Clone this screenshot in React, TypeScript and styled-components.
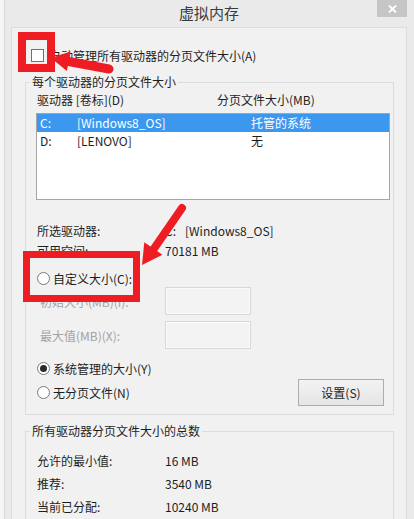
import React from 'react';
import styled, { createGlobalStyle } from 'styled-components';

const GlobalStyle = createGlobalStyle`
  html, body {
    margin: 0;
    padding: 0;
    background: #f6f6f6;
  }
  body {
    font-family: "Noto Sans CJK SC", "Noto Sans", sans-serif;
  }
`

const drives = [
    { letter: 'C:', label: '[Windows8_OS]', size: '托管的系统', selected: true },
    { letter: 'D:', label: '[LENOVO]', size: '无', selected: false },
]

const totals = [
    { name: '允许的最小值:', value: '16 MB' },
    { name: '推荐:', value: '3540 MB' },
    { name: '当前已分配:', value: '10240 MB' },
]

const RED = '#ee1d23'

function App() {
    return (
        <Page>
            <GlobalStyle />
            <Window>
                <TitleBar>
                    <span />
                    <Title>虚拟内存</Title>
                    <CloseButton>
                        <svg width="9" height="8" viewBox="0 0 9 8">
                            <path d="M1 0.5 L8 7.5 M8 0.5 L1 7.5" stroke="#fff" strokeWidth="1.8" />
                        </svg>
                    </CloseButton>
                </TitleBar>

                <Client>
                    <CheckRow>
                        <Checkbox />
                        <span>自动管理所有驱动器的分页文件大小(A)</span>
                    </CheckRow>

                    <Group $mt={11}>
                        <Legend>每个驱动器的分页文件大小</Legend>
                        <Header>
                            <span>驱动器 [卷标](D)</span>
                            <span>分页文件大小(MB)</span>
                        </Header>
                        <ListBox>
                            {drives.map(d => (
                                <ListRow key={d.letter} $selected={d.selected}>
                                    <span>{d.letter}</span>
                                    <span>{d.label}</span>
                                    <span>{d.size}</span>
                                </ListRow>
                            ))}
                        </ListBox>

                        <InfoRow $mt={21}>
                            <span>所选驱动器:</span>
                            <span>C:<Gap />[Windows8_OS]</span>
                        </InfoRow>
                        <InfoRow>
                            <span>可用空间:</span>
                            <span>70181 MB</span>
                        </InfoRow>

                        <RadioRow $mt={9}>
                            <Radio />
                            <span>自定义大小(C):</span>
                        </RadioRow>
                        <SizeRow $mt={1}>
                            <SizeLabel>初始大小(MB)(I):</SizeLabel>
                            <SizeInput />
                        </SizeRow>
                        <SizeRow $mt={6}>
                            <SizeLabel>最大值(MB)(X):</SizeLabel>
                            <SizeInput />
                        </SizeRow>

                        <RadioRow $mt={11}>
                            <Radio $checked />
                            <span>系统管理的大小(Y)</span>
                        </RadioRow>
                        <BottomRow>
                            <RadioRow>
                                <Radio />
                                <span>无分页文件(N)</span>
                            </RadioRow>
                            <SetButton>设置(S)</SetButton>
                        </BottomRow>
                    </Group>

                    <Group $mt={8}>
                        <Legend>所有驱动器分页文件大小的总数</Legend>
                        <TotalList>
                            {totals.map(t => (
                                <TotalRow key={t.name}>
                                    <span>{t.name}</span>
                                    <span>{t.value}</span>
                                </TotalRow>
                            ))}
                        </TotalList>
                    </Group>
                </Client>
            </Window>

            {/* red annotations drawn on top of the screenshot */}
            <Annotations width="414" height="519" viewBox="0 0 414 519">
                <rect x="22" y="36" width="29" height="32" fill="none" stroke={RED} strokeWidth="8" />
                <line x1="109" y1="69" x2="66" y2="61" stroke={RED} strokeWidth="9" strokeLinecap="round" />
                <polygon points="51,58 70.5,51.5 66.9,71.1" fill={RED} />

                <rect x="26.5" y="254.5" width="110" height="44" fill="none" stroke={RED} strokeWidth="7" />
                <line x1="182" y1="208" x2="151" y2="253" stroke={RED} strokeWidth="8" strokeLinecap="round" />
                <polygon points="142,265 162.4,254.7 144.3,242.3" fill={RED} />
            </Annotations>
        </Page>
    )
}

export default App

const Page = styled.div`
    position: relative;
    width: 414px;
    height: 519px;
    overflow: hidden;
`

const Window = styled.div`
    box-sizing: border-box;
    width: 410px;
    height: 519px;
    margin-left: 4px;
    border-left: 1px solid #d6d6d6;
    padding: 0 7px 0 6px;
    background: #eaeaea;
    display: flex;
    flex-direction: column;
`

const TitleBar = styled.div`
    height: 27px;
    flex-shrink: 0;
    display: grid;
    grid-template-columns: 1fr auto 1fr;
`

const Title = styled.div`
    font-size: 15px;
    line-height: 26px;
    color: #3a3a3a;
`

const CloseButton = styled.div`
    justify-self: end;
    align-self: start;
    width: 30px;
    height: 17px;
    background: #c6c6c6;
    display: flex;
    align-items: center;
    justify-content: center;
`

const Client = styled.div`
    flex: 1;
    box-sizing: border-box;
    border: 1px solid #dcdcdc;
    border-bottom: none;
    background: #f1f1f1;
    padding: 19px 12px 0 13px;
    font-size: 12px;
    color: #1e1e1e;
`

const CheckRow = styled.div`
    display: flex;
    align-items: center;
    gap: 5px;
    height: 16px;
    padding-left: 6px;
`

const Checkbox = styled.span`
    box-sizing: border-box;
    width: 13px;
    height: 13px;
    border: 1px solid #707070;
    background: #fff;
`

const Group = styled.fieldset<{ $mt: number }>`
    margin: ${p => p.$mt}px 0 0;
    padding: 0 3px 8px 10px;
    border: 1px solid #dcdcdc;
    min-width: 0;
`

const Legend = styled.legend`
    padding: 0 2px;
    margin-left: -6px;
    line-height: 16px;
    font-size: 12px;
    color: #1e1e1e;
`

const Header = styled.div`
    display: grid;
    grid-template-columns: 180px 1fr;
    line-height: 16px;
    margin-top: 2px;
    padding-left: 1px;
`

const ListBox = styled.div`
    box-sizing: border-box;
    height: 87px;
    margin-top: 5px;
    border: 1px solid #a5a5a5;
    background: #fff;
`

const ListRow = styled.div<{ $selected?: boolean }>`
    display: grid;
    grid-template-columns: 37px 174px 1fr;
    height: 18px;
    line-height: 17px;
    padding-left: 3px;
    background: ${p => (p.$selected ? '#3c98ee' : 'transparent')};
    color: ${p => (p.$selected ? '#fff' : '#1e1e1e')};
`

const InfoRow = styled.div<{ $mt?: number }>`
    display: grid;
    grid-template-columns: 128px 1fr;
    line-height: 20px;
    padding-left: 1px;
    margin-top: ${p => p.$mt || 0}px;
`

const Gap = styled.span`
    display: inline-block;
    width: 9px;
`

const RadioRow = styled.div<{ $mt?: number }>`
    display: flex;
    align-items: center;
    gap: 3px;
    height: 16px;
    padding-left: 1px;
    margin-top: ${p => p.$mt || 0}px;
`

const Radio = styled.span<{ $checked?: boolean }>`
    box-sizing: border-box;
    width: 13px;
    height: 13px;
    border-radius: 50%;
    border: 1px solid #7a7a7a;
    background: #fff;
    display: flex;
    align-items: center;
    justify-content: center;

    &::after {
        content: '';
        width: 7px;
        height: 7px;
        border-radius: 50%;
        background: ${p => (p.$checked ? '#2a2a2a' : 'transparent')};
    }
`

const SizeRow = styled.div<{ $mt: number }>`
    display: grid;
    grid-template-columns: 128px 86px;
    align-items: center;
    padding-left: 1px;
    margin-top: ${p => p.$mt}px;
    color: #a3a3a3;
`

const SizeLabel = styled.span`
    padding-left: 3px;
`

const SizeInput = styled.div`
    box-sizing: border-box;
    height: 28px;
    border: 1px solid #d8d8d8;
    box-shadow: inset 0 0 0 1px #fafafa;
    background: #f3f3f3;
`

const BottomRow = styled.div`
    display: flex;
    align-items: center;
    justify-content: space-between;
    height: 27px;
    margin-top: 3px;
`

const SetButton = styled.button`
    box-sizing: border-box;
    width: 86px;
    height: 27px;
    margin-right: 6px;
    border: 1px solid #adadad;
    background: linear-gradient(#f3f3f3, #e5e5e5);
    font-family: "Noto Sans CJK SC", "Noto Sans", sans-serif;
    font-size: 12px;
    color: #1e1e1e;
    padding: 0;
`

const TotalList = styled.div`
    display: flex;
    flex-direction: column;
    gap: 1px;
    margin-top: 11px;
`

const TotalRow = styled.div`
    display: grid;
    grid-template-columns: 128px 1fr;
    line-height: 22px;
    padding-left: 1px;
`

const Annotations = styled.svg`
    position: absolute;
    left: 0;
    top: 0;
    pointer-events: none;
`
